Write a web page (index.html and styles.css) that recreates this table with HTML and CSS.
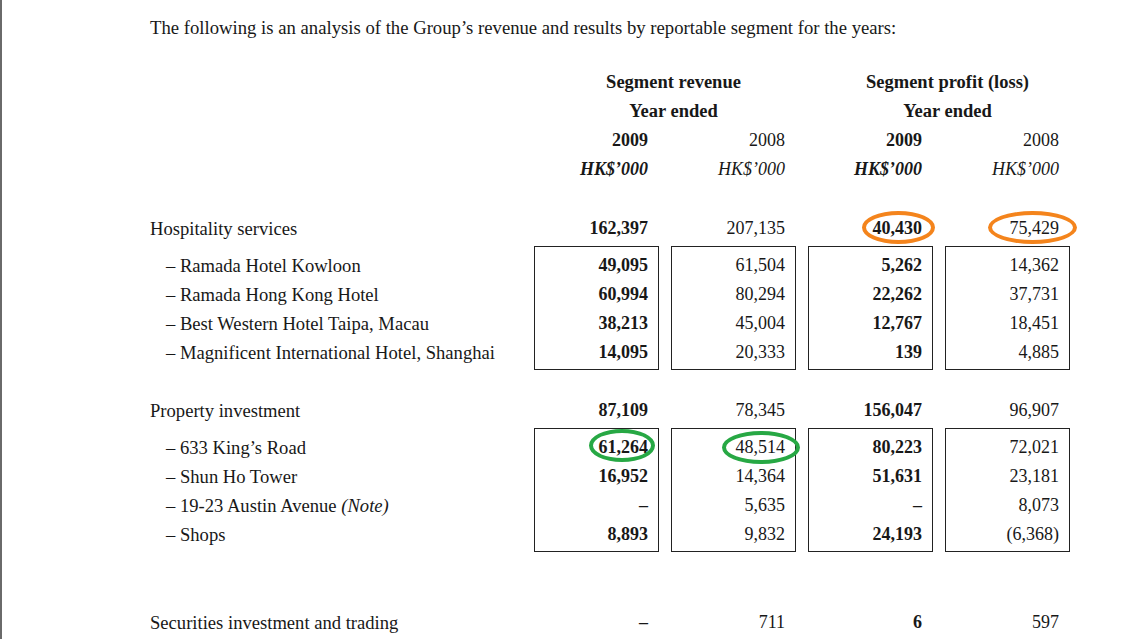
FILE: index.html
```html
<!DOCTYPE html>
<html lang="en">
<head>
<meta charset="utf-8">
<title>Segment analysis</title>
<link rel="stylesheet" href="styles.css">
</head>
<body>
<div class="page">
  <p class="intro">The following is an analysis of the Group’s revenue and results by reportable segment for the years:</p>

  <div class="grid head">
    <div class="label"></div>
    <div class="span">Segment revenue<br>Year ended</div>
    <div class="span">Segment profit (loss)<br>Year ended</div>

    <div class="label"></div>
    <div class="num b">2009<br><i>HK$’000</i></div>
    <div class="num">2008<br><i>HK$’000</i></div>
    <div class="num b">2009<br><i>HK$’000</i></div>
    <div class="num">2008<br><i>HK$’000</i></div>
  </div>

  <div class="grid section first">
    <div class="label">Hospitality services</div>
    <div class="num b">162,397</div>
    <div class="num">207,135</div>
    <div class="num b"><span class="ring orange ring-oa">40,430</span></div>
    <div class="num"><span class="ring orange ring-ob">75,429</span></div>

    <div class="label sub">
      <div>– Ramada Hotel Kowloon</div>
      <div>– Ramada Hong Kong Hotel</div>
      <div>– Best Western Hotel Taipa, Macau</div>
      <div>– Magnificent International Hotel, Shanghai</div>
    </div>
    <div class="box num b"><div>49,095</div><div>60,994</div><div>38,213</div><div>14,095</div></div>
    <div class="box num"><div>61,504</div><div>80,294</div><div>45,004</div><div>20,333</div></div>
    <div class="box num b"><div>5,262</div><div>22,262</div><div>12,767</div><div>139</div></div>
    <div class="box num"><div>14,362</div><div>37,731</div><div>18,451</div><div>4,885</div></div>
  </div>

  <div class="grid section second">
    <div class="label">Property investment</div>
    <div class="num b">87,109</div>
    <div class="num">78,345</div>
    <div class="num b">156,047</div>
    <div class="num">96,907</div>

    <div class="label sub">
      <div>– 633 King’s Road</div>
      <div>– Shun Ho Tower</div>
      <div>– 19-23 Austin Avenue <i>(Note)</i></div>
      <div>– Shops</div>
    </div>
    <div class="box num b"><div><span class="ring green ring-ga">61,264</span></div><div>16,952</div><div>–</div><div>8,893</div></div>
    <div class="box num"><div><span class="ring green ring-gb">48,514</span></div><div>14,364</div><div>5,635</div><div>9,832</div></div>
    <div class="box num b"><div>80,223</div><div>51,631</div><div>–</div><div>24,193</div></div>
    <div class="box num"><div>72,021</div><div>23,181</div><div>8,073</div><div>(6,368)</div></div>
  </div>

  <div class="grid section third">
    <div class="label">Securities investment and trading</div>
    <div class="num b">–</div>
    <div class="num">711</div>
    <div class="num b">6</div>
    <div class="num">597</div>
  </div>
</div>
</body>
</html>
```

FILE: styles.css
```css
html, body {
  margin: 0;
  padding: 0;
  background: #ffffff;
}

body {
  font-family: "Liberation Serif", "Times New Roman", serif;
  font-size: 18px;
  color: #181818;
}

.page {
  box-sizing: border-box;
  height: 639px;
  overflow: hidden;
  border-left: 2px solid #6a6a6a;
  padding-left: 148px;
}

.intro {
  margin: 0;
  padding-top: 13px;
  line-height: 29px;
  font-size: 18.7px;
}

.grid {
  display: grid;
  grid-template-columns: 372px 125px 125px 125px 125px;
  column-gap: 12px;
  line-height: 29px;
}

.label {
  font-size: 18.6px;
}

.head {
  margin-top: 26px;
}

.span {
  grid-column: span 2;
  text-align: center;
  padding-left: 17px;
  font-weight: bold;
  font-size: 18.5px;
}

.num {
  text-align: right;
  padding-right: 11px;
}

.b {
  font-weight: bold;
}

.section {
  row-gap: 3px;
}

.first {
  margin-top: 30px;
}

.second {
  margin-top: 26px;
}

.third {
  margin-top: 56px;
}

.sub {
  padding-top: 5px;
  padding-left: 16px;
}

.box {
  border: 1px solid #222222;
  padding: 4px 10px 2px 0;
}

.ring {
  position: relative;
  display: inline-block;
  line-height: 29px;
}

.ring::after {
  content: "";
  position: absolute;
  border: 4px solid;
  border-radius: 50%;
  top: -2px;
  bottom: -2px;
}

.orange::after {
  border-color: #f4841c;
}

.green::after {
  border-color: #27a844;
}

.ring-oa::after {
  left: -11px;
  right: -13px;
  top: -3px;
  bottom: -1px;
}

.ring-ob::after {
  left: -22px;
  right: -18px;
  top: -3px;
  bottom: -1px;
}

.ring-ga::after {
  left: -10px;
  right: -7px;
  top: -4px;
  bottom: 0;
}

.ring-gb::after {
  left: -14px;
  right: -15px;
  top: -2px;
  bottom: -2px;
}
```
